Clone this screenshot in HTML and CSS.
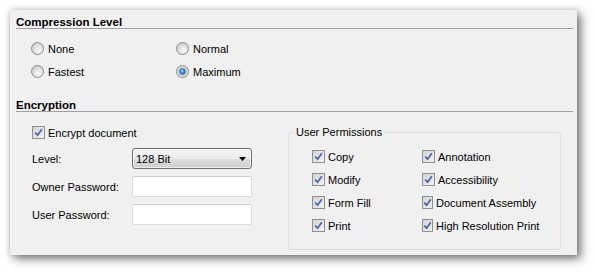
FILE: index.html
```html
<!DOCTYPE html>
<html lang="en-us">
<head>
  <meta charset="UTF-8">
  <title>Compression and Encryption</title>
  <link rel="stylesheet" href="styles.css">
</head>
<body>
  <div class="panel">
    <div class="section-title">Compression Level</div>
    <div class="radio-grid">
      <label class="opt"><span class="radio"></span>None</label>
      <label class="opt"><span class="radio"></span>Normal</label>
      <label class="opt"><span class="radio"></span>Fastest</label>
      <label class="opt"><span class="radio checked"></span>Maximum</label>
    </div>

    <div class="section-title enc">Encryption</div>
    <div class="enc-body">
      <div class="enc-left">
        <label class="opt check-row">
          <span class="check"><svg width="9" height="9" viewBox="0 0 9 9"><path d="M1.2 4.6 L3.6 7.2 L7.8 1.2"/></svg></span>Encrypt document
        </label>
        <div class="form-grid">
          <span>Level:</span>
          <div class="combo"><span>128 Bit</span><svg width="7" height="4" viewBox="0 0 7 4"><polygon points="0,0 7,0 3.5,4"/></svg></div>
          <span>Owner Password:</span>
          <input class="field" type="password">
          <span>User Password:</span>
          <input class="field" type="password">
        </div>
      </div>

      <fieldset class="perms">
        <legend>User Permissions</legend>
        <div class="perm-grid">
          <label class="opt"><span class="check"><svg width="9" height="9" viewBox="0 0 9 9"><path d="M1.2 4.6 L3.6 7.2 L7.8 1.2"/></svg></span>Copy</label>
          <label class="opt"><span class="check"><svg width="9" height="9" viewBox="0 0 9 9"><path d="M1.2 4.6 L3.6 7.2 L7.8 1.2"/></svg></span>Annotation</label>
          <label class="opt"><span class="check"><svg width="9" height="9" viewBox="0 0 9 9"><path d="M1.2 4.6 L3.6 7.2 L7.8 1.2"/></svg></span>Modify</label>
          <label class="opt"><span class="check"><svg width="9" height="9" viewBox="0 0 9 9"><path d="M1.2 4.6 L3.6 7.2 L7.8 1.2"/></svg></span>Accessibility</label>
          <label class="opt"><span class="check"><svg width="9" height="9" viewBox="0 0 9 9"><path d="M1.2 4.6 L3.6 7.2 L7.8 1.2"/></svg></span>Form Fill</label>
          <label class="opt"><span class="check"><svg width="9" height="9" viewBox="0 0 9 9"><path d="M1.2 4.6 L3.6 7.2 L7.8 1.2"/></svg></span>Document Assembly</label>
          <label class="opt"><span class="check"><svg width="9" height="9" viewBox="0 0 9 9"><path d="M1.2 4.6 L3.6 7.2 L7.8 1.2"/></svg></span>Print</label>
          <label class="opt"><span class="check"><svg width="9" height="9" viewBox="0 0 9 9"><path d="M1.2 4.6 L3.6 7.2 L7.8 1.2"/></svg></span>High Resolution Print</label>
        </div>
      </fieldset>
    </div>
  </div>
</body>
</html>
```

FILE: styles.css
```css
html,
body {
  height: 273px;
}
body {
  margin: 0;
  overflow: hidden;
  background: #fff;
  font-family: "Liberation Sans", Arial, sans-serif;
  font-size: 11px;
  color: #000;
}
.panel {
  margin: 10px 0 0 10px;
  width: 567px;
  height: 245px;
  box-sizing: border-box;
  padding-left: 6px;
  background: #f0f0f0;
  box-shadow: 0 0 6px rgba(0, 0, 0, 0.18), 4px 4px 9px rgba(0, 0, 0, 0.5);
}
.section-title {
  font-weight: bold;
  font-size: 11.5px;
  line-height: 12px;
  padding-top: 6px;
  margin-right: 4px;
  border-bottom: 1px solid #a0a0a0;
}
.section-title.enc {
  margin-top: 16px;
  padding-top: 0;
}
.radio-grid {
  display: grid;
  grid-template-columns: 145px 145px;
  grid-auto-rows: 23px;
  padding: 8px 0 0 15px;
}
.opt {
  display: flex;
  align-items: center;
  white-space: nowrap;
}
.radio {
  position: relative;
  width: 13px;
  height: 13px;
  box-sizing: border-box;
  margin-right: 4px;
  border: 1px solid #8a8a8a;
  border-radius: 50%;
  background: radial-gradient(circle at 62% 68%, #fafafa 0, #e2e2e2 45%, #bdbdbd 100%);
}
.radio.checked {
  background: radial-gradient(circle, #1c5fb8 0, #3a8ae0 28%, #9c9c9c 42%, #e6e6e6 60%, #c4c4c4 100%);
}
.radio.checked::after {
  content: "";
  position: absolute;
  left: 3px;
  top: 3px;
  width: 5px;
  height: 5px;
  border-radius: 50%;
  background: radial-gradient(circle at 45% 40%, #a5e2ff 0, #2b86e2 50%, #0d3f86 100%);
}
.check {
  display: flex;
  align-items: center;
  justify-content: center;
  width: 13px;
  height: 13px;
  box-sizing: border-box;
  margin-right: 3px;
  border: 1px solid #8f8f8f;
  background: linear-gradient(135deg, #d2d2d2, #f4f4f4);
}
.check path {
  fill: none;
  stroke: #4a63a8;
  stroke-width: 1.7;
}
.enc-body {
  display: flex;
  padding-top: 13px;
}
.enc-left {
  width: 272px;
  box-sizing: border-box;
  padding-left: 16px;
}
.check-row {
  height: 15px;
}
.form-grid {
  display: grid;
  grid-template-columns: 100px 120px;
  grid-auto-rows: 21px;
  row-gap: 7px;
  align-items: center;
  margin-top: 8px;
}
.combo {
  display: flex;
  align-items: center;
  justify-content: space-between;
  height: 21px;
  box-sizing: border-box;
  padding: 0 5px 0 3px;
  border: 1px solid #707070;
  border-radius: 3px;
  background: linear-gradient(#f3f3f3 0, #ebebeb 50%, #dddddd 50%, #cfcfcf 100%);
  box-shadow: inset 0 0 0 1px rgba(255, 255, 255, 0.6);
}
.field {
  width: 120px;
  height: 21px;
  box-sizing: border-box;
  margin: 0;
  border: 1px solid #dcdcdc;
  border-top-color: #cfcfcf;
  border-radius: 2px;
  background: #fff;
}
.perms {
  width: 273px;
  min-width: 0;
  box-sizing: border-box;
  margin: 0;
  padding: 5px 0 12px 5px;
  border: 1px solid #d5dfe5;
  border-radius: 3px;
}
.perms legend {
  padding: 0 2px;
  line-height: 15px;
}
.perm-grid {
  display: grid;
  grid-template-columns: 110px 110px;
  grid-auto-rows: 23px;
  margin-left: 18px;
}
```
